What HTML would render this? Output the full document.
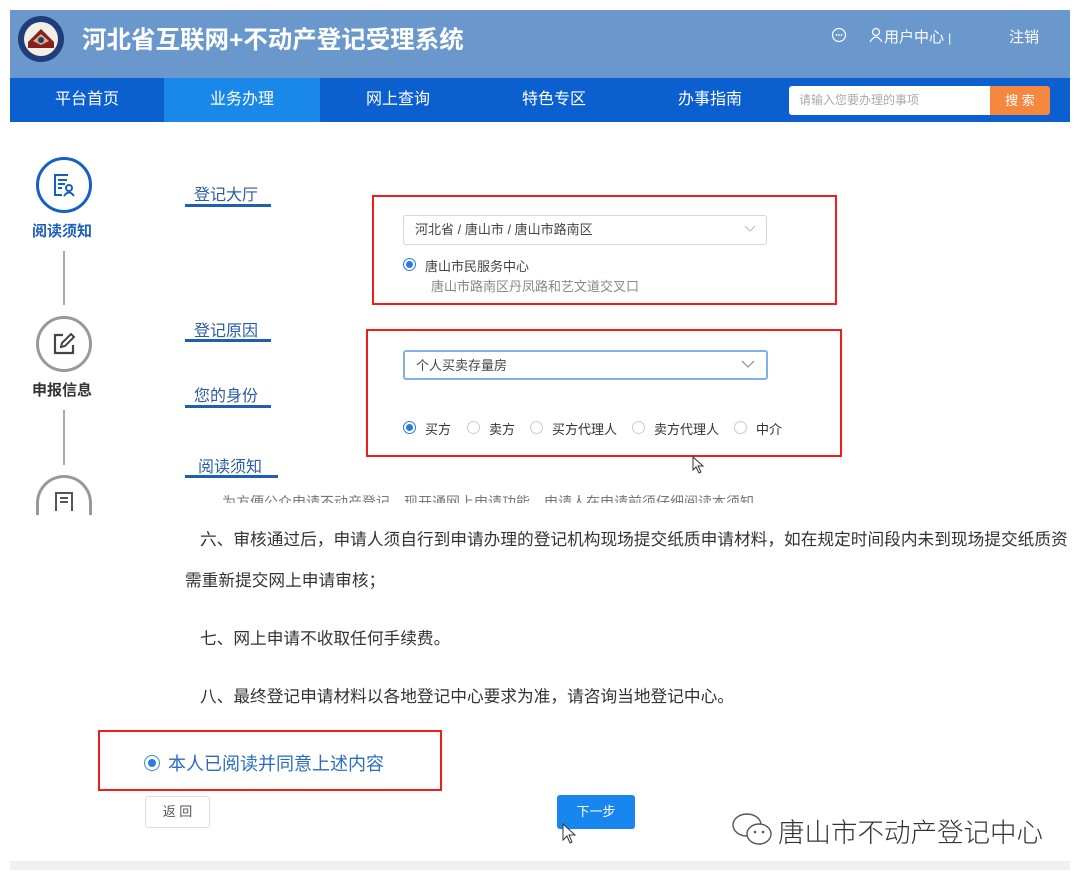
<!DOCTYPE html>
<html><head><meta charset="utf-8"><style>
*{margin:0;padding:0;box-sizing:border-box}
body{width:1080px;height:877px;background:#fff;position:relative;overflow:hidden;font-family:"Liberation Sans","Noto Sans CJK SC",sans-serif;color:#333}
.a{position:absolute;white-space:nowrap}
.hdr{left:10px;top:10px;width:1060px;height:68px;background:#6a98cd}
.nav{left:10px;top:78px;width:1060px;height:44px;background:#0b5fcf}
.tab{top:78px;height:44px;line-height:44px;color:#fff;font-size:16px;text-align:center;width:156px}
.sec{font-size:16px;color:#2a5ca8}
.ul{height:3px;background:#1f5fb0}
.red{border:2px solid #f21c1c}
.sel{border:1px solid #d8d8d8;border-radius:3px;background:#fff;font-size:13px;color:#444;padding-left:11px;line-height:28px}
.rad{width:13px;height:13px;border:1px solid #ccc;border-radius:50%;background:#fff}
.rad.on{border-color:#2a7be0}
.rad.on:after{content:"";position:absolute;left:2px;top:2px;width:7px;height:7px;border-radius:50%;background:#2a7be0}
.t{font-size:16.7px;color:#333}
</style></head><body>
<div class="a hdr"></div>
<svg class="a" style="left:16px;top:14px" width="50" height="50" viewBox="0 0 50 50"><circle cx="25" cy="25" r="23" fill="#1e3d7a"/><circle cx="25" cy="25" r="17" fill="#f3efe6"/><path d="M12 28 L25 15 L38 28 L38 34 L12 34Z" fill="#8a1f1f"/><path d="M17 27 L25 20 L33 27 L25 31Z" fill="#d9b27a"/><circle cx="25" cy="26" r="3" fill="#1e3d7a"/></svg>
<div class="a" style="left:82px;top:21px;font-size:24.5px;font-weight:bold;color:#fff">河北省互联网+不动产登记受理系统</div>
<svg class="a" style="left:831px;top:27px" width="16" height="16" viewBox="0 0 16 16"><circle cx="8" cy="8" r="6.5" fill="none" stroke="#fff" stroke-width="1.2"/><circle cx="5.5" cy="8" r=".9" fill="#fff"/><circle cx="8" cy="8" r=".9" fill="#fff"/><circle cx="10.5" cy="8" r=".9" fill="#fff"/></svg>
<svg class="a" style="left:869px;top:27px" width="14" height="16" viewBox="0 0 14 16"><circle cx="7" cy="5" r="3.5" fill="none" stroke="#fff" stroke-width="1.2"/><path d="M1 15 Q7 5 13 15" fill="none" stroke="#fff" stroke-width="1.2"/></svg>
<div class="a" style="left:884px;top:26px;font-size:15px;color:#fff">用户中心 <span style="font-size:12px">|</span></div>
<div class="a" style="left:1009px;top:26px;font-size:15px;color:#fff">注销</div>
<div class="a nav"></div>
<div class="a" style="left:164px;top:78px;width:156px;height:44px;background:#1a88e8"></div>
<div class="a tab" style="left:9px">平台首页</div>
<div class="a tab" style="left:164px">业务办理</div>
<div class="a tab" style="left:320px">网上查询</div>
<div class="a tab" style="left:476px">特色专区</div>
<div class="a tab" style="left:632px">办事指南</div>
<div class="a" style="left:789px;top:86px;width:201px;height:29px;background:#fff;border-radius:3px 0 0 3px;font-size:12px;color:#aaa;line-height:29px;padding-left:10px">请输入您要办理的事项</div>
<div class="a" style="left:990px;top:86px;width:60px;height:29px;background:#f5873e;border-radius:0 3px 3px 0;font-size:13px;color:#fff;line-height:29px;text-align:center">搜 索</div>

<div class="a" style="left:36px;top:157px;width:56px;height:56px;border:3px solid #1560c0;border-radius:50%"></div>
<svg class="a" style="left:51px;top:172px" width="26" height="26" viewBox="0 0 26 26"><path d="M17 3H4v20h7M7 8h9M7 12h7M7 16h4" fill="none" stroke="#1560c0" stroke-width="2"/><circle cx="18" cy="16" r="3" fill="none" stroke="#1560c0" stroke-width="2"/><path d="M13 24q5-7 10 0" fill="none" stroke="#1560c0" stroke-width="2"/></svg>
<div class="a" style="left:32px;top:220px;font-size:15px;font-weight:bold;color:#1d5fb8">阅读须知</div>
<div class="a" style="left:63px;top:251px;width:2px;height:54px;background:#aaa"></div>
<div class="a" style="left:36px;top:316px;width:56px;height:56px;border:3px solid #999;border-radius:50%"></div>
<svg class="a" style="left:51px;top:331px" width="26" height="26" viewBox="0 0 26 26"><path d="M12 4H4v18h18v-8" fill="none" stroke="#444" stroke-width="2.2"/><path d="M10 16l1-4 9-9 3 3-9 9z" fill="none" stroke="#444" stroke-width="2"/></svg>
<div class="a" style="left:32px;top:379px;font-size:15px;font-weight:bold;color:#333">申报信息</div>
<div class="a" style="left:63px;top:410px;width:2px;height:55px;background:#aaa"></div>
<div class="a" style="left:36px;top:475px;width:56px;height:40px;border:3px solid #999;border-bottom:none;border-radius:28px 28px 0 0"></div>
<svg class="a" style="left:54px;top:491px" width="20" height="20" viewBox="0 0 20 20"><path d="M2 20V2h16v18M6 7h8M6 11h8" fill="none" stroke="#555" stroke-width="2"/></svg>

<div class="a sec" style="left:194px;top:181px">登记大厅</div><div class="a ul" style="left:185px;top:204px;width:86px"></div>
<div class="a sec" style="left:194px;top:317px">登记原因</div><div class="a ul" style="left:185px;top:339px;width:86px"></div>
<div class="a sec" style="left:194px;top:382px">您的身份</div><div class="a ul" style="left:185px;top:405px;width:86px"></div>
<div class="a sec" style="left:198px;top:453px">阅读须知</div><div class="a ul" style="left:185px;top:475px;width:93px"></div>

<div class="a red" style="left:372px;top:195px;width:465px;height:110px"></div>
<div class="a sel" style="left:403px;top:215px;width:364px;height:30px">河北省 / 唐山市 / 唐山市路南区</div>
<svg class="a" style="left:744px;top:225px" width="12" height="8"><path d="M1 1l5 5 5-5" fill="none" stroke="#bbb"/></svg>
<div class="a rad on" style="left:403px;top:258px"></div>
<div class="a" style="left:425px;top:256px;font-size:13px;color:#444">唐山市民服务中心</div>
<div class="a" style="left:431px;top:276px;font-size:13px;color:#888">唐山市路南区丹凤路和艺文道交叉口</div>

<div class="a red" style="left:366px;top:329px;width:476px;height:128px"></div>
<div class="a sel" style="left:403px;top:350px;width:365px;height:30px;border:2px solid #7fb0e8">个人买卖存量房</div>
<svg class="a" style="left:741px;top:360px" width="14" height="10"><path d="M1 1l6 6 6-6" fill="none" stroke="#999" stroke-width="1.3"/></svg>
<div class="a rad on" style="left:403px;top:421px"></div><div class="a" style="left:425px;top:419px;font-size:13px">买方</div>
<div class="a rad" style="left:467px;top:421px"></div><div class="a" style="left:489px;top:419px;font-size:13px">卖方</div>
<div class="a rad" style="left:530px;top:421px"></div><div class="a" style="left:552px;top:419px;font-size:13px">买方代理人</div>
<div class="a rad" style="left:632px;top:421px"></div><div class="a" style="left:654px;top:419px;font-size:13px">卖方代理人</div>
<div class="a rad" style="left:734px;top:421px"></div><div class="a" style="left:756px;top:419px;font-size:13px">中介</div>
<svg class="a" style="left:692px;top:456px" width="14" height="18"><path d="M1 1v13l3-3 3 6 2-1-3-6h5z" fill="#fff" stroke="#333"/></svg>
<div class="a" style="left:222px;top:492px;font-size:14px;color:#777;height:11px;overflow:hidden">为方便公众申请不动产登记，现开通网上申请功能，申请人在申请前须仔细阅读本须知</div>

<div class="a t" style="left:200px;top:526px">六、审核通过后，申请人须自行到申请办理的登记机构现场提交纸质申请材料，如在规定时间段内未到现场提交纸质资</div>
<div class="a t" style="left:185px;top:567px">需重新提交网上申请审核；</div>
<div class="a t" style="left:200px;top:625px">七、网上申请不收取任何手续费。</div>
<div class="a t" style="left:200px;top:683px">八、最终登记申请材料以各地登记中心要求为准，请咨询当地登记中心。</div>

<div class="a red" style="left:98px;top:730px;width:344px;height:61px"></div>
<div class="a" style="left:144px;top:755px;width:16px;height:16px;border:1.5px solid #3a88e0;border-radius:50%"></div>
<div class="a" style="left:148px;top:759px;width:8px;height:8px;border-radius:50%;background:#2a7be0"></div>
<div class="a" style="left:168px;top:750px;font-size:18px;color:#2a6cc4">本人已阅读并同意上述内容</div>
<div class="a" style="left:145px;top:796px;width:65px;height:32px;border:1px solid #ddd;border-radius:3px;font-size:13px;color:#555;text-align:center;line-height:30px">返 回</div>
<div class="a" style="left:557px;top:795px;width:78px;height:34px;background:#1786ee;border-radius:3px;font-size:13px;color:#fff;text-align:center;line-height:34px">下一步</div>
<svg class="a" style="left:562px;top:823px" width="14" height="22"><path d="M1 1v16l4-4 3 7 2-1-3-7h6z" fill="#fff" stroke="#333"/></svg>
<svg class="a" style="left:730px;top:810px" width="46" height="40" viewBox="0 0 46 40"><ellipse cx="17" cy="15" rx="14" ry="11" fill="none" stroke="#555" stroke-width="1.4"/><ellipse cx="29" cy="24" rx="12" ry="10" fill="#fff" stroke="#555" stroke-width="1.4"/><circle cx="25" cy="22" r="1.3" fill="#555"/><circle cx="33" cy="22" r="1.3" fill="#555"/></svg>
<div class="a" style="left:778px;top:811px;font-size:26.5px;color:#333;font-weight:300">唐山市不动产登记中心</div>
<div class="a" style="left:10px;top:861px;width:1060px;height:9px;background:#f0f0f0"></div>
</body></html>
